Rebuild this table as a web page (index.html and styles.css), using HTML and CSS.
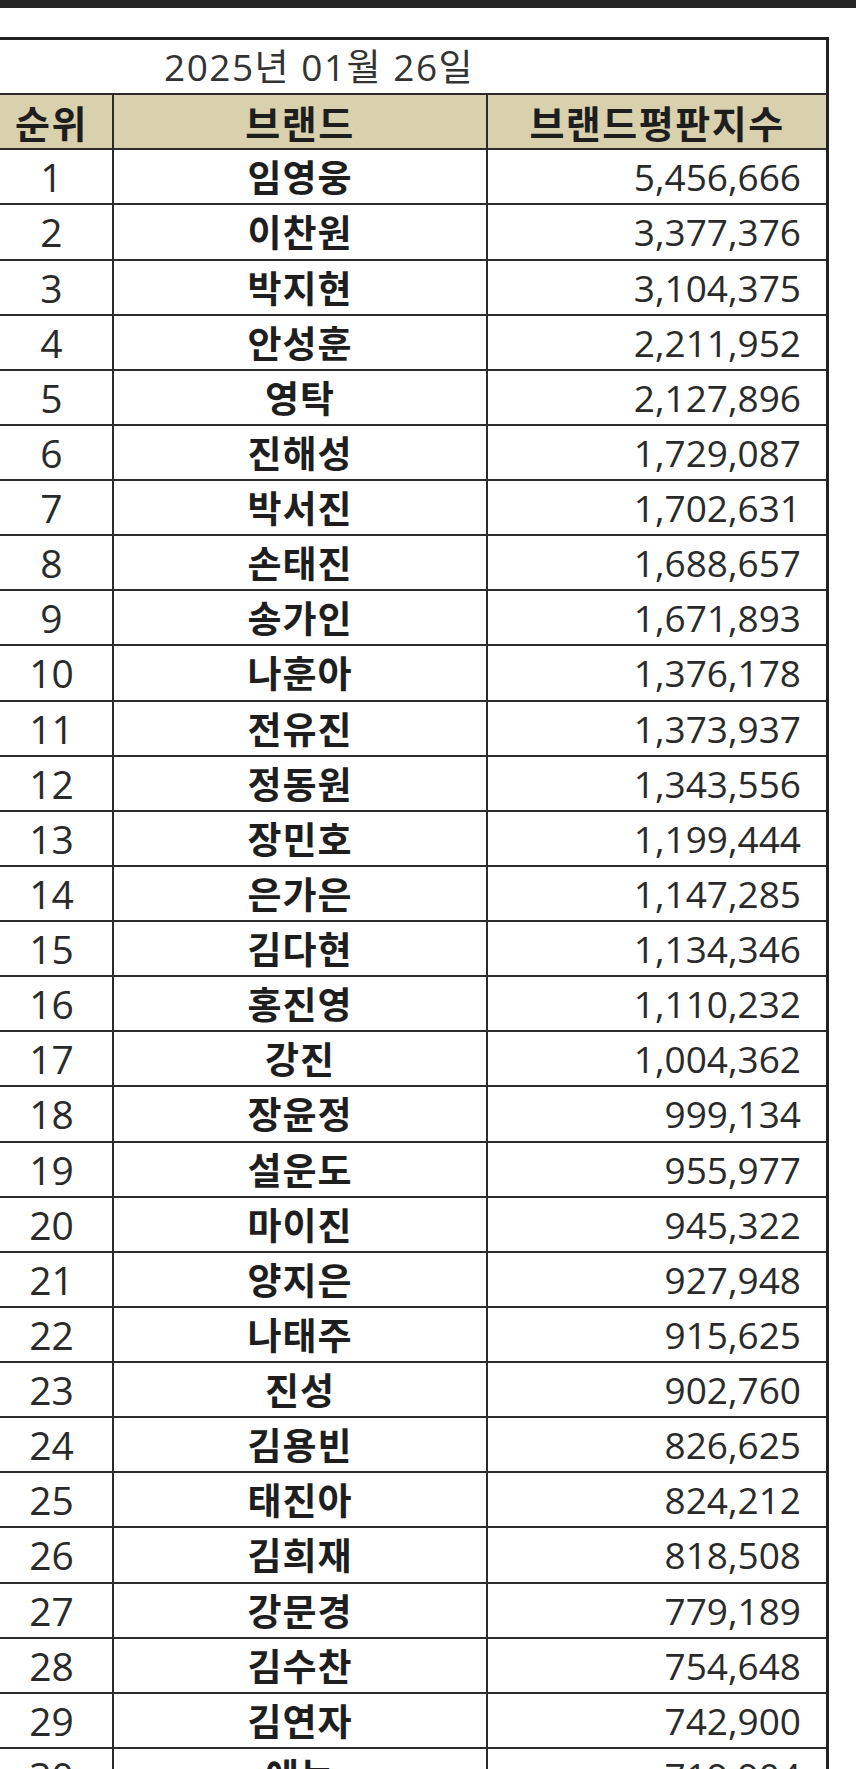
FILE: index.html
```html
<!DOCTYPE html>
<html lang="ko">
<head>
<meta charset="utf-8">
<title>브랜드평판지수</title>
<link rel="stylesheet" href="styles.css">
</head>
<body>
<div class="topbar"></div>
<div class="sheet">
  <div class="date">2025년 01월 26일</div>
  <div class="hd">순위</div><div class="hd">브랜드</div><div class="hd">브랜드평판지수</div>
  <div class="rk">1</div><div class="nm">임영웅</div><div class="val">5,456,666</div>
  <div class="rk">2</div><div class="nm">이찬원</div><div class="val">3,377,376</div>
  <div class="rk">3</div><div class="nm">박지현</div><div class="val">3,104,375</div>
  <div class="rk">4</div><div class="nm">안성훈</div><div class="val">2,211,952</div>
  <div class="rk">5</div><div class="nm">영탁</div><div class="val">2,127,896</div>
  <div class="rk">6</div><div class="nm">진해성</div><div class="val">1,729,087</div>
  <div class="rk">7</div><div class="nm">박서진</div><div class="val">1,702,631</div>
  <div class="rk">8</div><div class="nm">손태진</div><div class="val">1,688,657</div>
  <div class="rk">9</div><div class="nm">송가인</div><div class="val">1,671,893</div>
  <div class="rk">10</div><div class="nm">나훈아</div><div class="val">1,376,178</div>
  <div class="rk">11</div><div class="nm">전유진</div><div class="val">1,373,937</div>
  <div class="rk">12</div><div class="nm">정동원</div><div class="val">1,343,556</div>
  <div class="rk">13</div><div class="nm">장민호</div><div class="val">1,199,444</div>
  <div class="rk">14</div><div class="nm">은가은</div><div class="val">1,147,285</div>
  <div class="rk">15</div><div class="nm">김다현</div><div class="val">1,134,346</div>
  <div class="rk">16</div><div class="nm">홍진영</div><div class="val">1,110,232</div>
  <div class="rk">17</div><div class="nm">강진</div><div class="val">1,004,362</div>
  <div class="rk">18</div><div class="nm">장윤정</div><div class="val">999,134</div>
  <div class="rk">19</div><div class="nm">설운도</div><div class="val">955,977</div>
  <div class="rk">20</div><div class="nm">마이진</div><div class="val">945,322</div>
  <div class="rk">21</div><div class="nm">양지은</div><div class="val">927,948</div>
  <div class="rk">22</div><div class="nm">나태주</div><div class="val">915,625</div>
  <div class="rk">23</div><div class="nm">진성</div><div class="val">902,760</div>
  <div class="rk">24</div><div class="nm">김용빈</div><div class="val">826,625</div>
  <div class="rk">25</div><div class="nm">태진아</div><div class="val">824,212</div>
  <div class="rk">26</div><div class="nm">김희재</div><div class="val">818,508</div>
  <div class="rk">27</div><div class="nm">강문경</div><div class="val">779,189</div>
  <div class="rk">28</div><div class="nm">김수찬</div><div class="val">754,648</div>
  <div class="rk">29</div><div class="nm">김연자</div><div class="val">742,900</div>
  <div class="rk">30</div><div class="nm">에녹</div><div class="val">719,904</div>
</div>
</body>
</html>
```
FILE: styles.css
```css
html, body {
  margin: 0;
  padding: 0;
  background: #ffffff;
  height: 1769px;
  overflow: hidden;
}
body {
  font-family: "Open Sans", "Noto Sans CJK KR", sans-serif;
  color: #262626;
}
.topbar {
  height: 8px;
  background: #262626;
}
.sheet {
  margin-top: 29px;
  margin-left: -12px;
  width: 835px;
  display: grid;
  grid-template-columns: 121px 372px 338px;
  grid-auto-rows: 53.14px;
  gap: 2px;
  background: #2c2c2c;
  border: 3px solid #222222;
  border-bottom: none;
}
.sheet > div {
  background: #ffffff;
  display: flex;
  align-items: center;
  font-size: 37px;
  line-height: 1;
  white-space: nowrap;
}
.sheet > .date {
  grid-column: 1 / 4;
  padding-left: 173px;
  font-size: 37px;
  color: #333333;
  letter-spacing: 1.5px;
}
.sheet > .hd {
  background: #d9d0ad;
  justify-content: center;
  font-family: "Noto Sans CJK KR", sans-serif;
  font-weight: 700;
  font-size: 38px;
  letter-spacing: 1.5px;
  color: #1e1e1e;
}
.sheet > .rk {
  justify-content: center;
  font-size: 39px;
  color: #2a2a2a;
}
.sheet > .nm {
  justify-content: center;
  font-family: "Noto Sans CJK KR", sans-serif;
  font-weight: 700;
  font-size: 37px;
  letter-spacing: 1px;
  color: #1e1e1e;
}
.sheet > .val {
  justify-content: flex-end;
  padding-right: 25px;
  color: #2a2a2a;
}
```
